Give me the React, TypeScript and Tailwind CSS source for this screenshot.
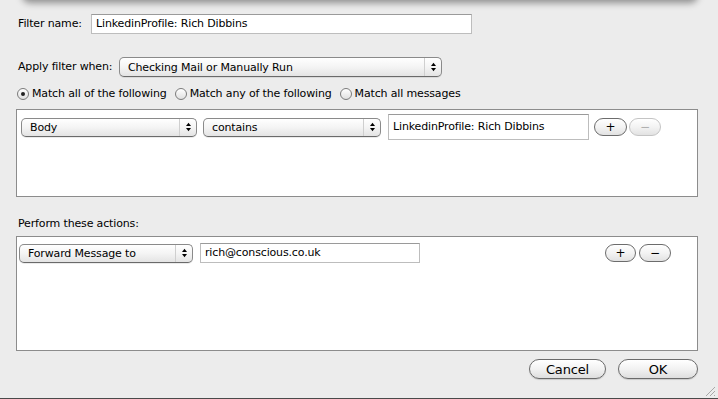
import React from "react";

function Arrows() {
  return (
    <svg width="7" height="10" viewBox="0 0 7 10" className="text-black">
      <path d="M3.5 0.8 L6 4 L1 4 Z" fill="currentColor" />
      <path d="M1 6 L6 6 L3.5 9.2 Z" fill="currentColor" />
    </svg>
  );
}

function Popup({ label, className }: { label: string; className: string }) {
  return (
    <div
      className={
        "flex shrink-0 items-stretch rounded-[5px] border border-[#8a8a8a] border-b-[#6a6a6a] bg-gradient-to-b from-[#ffffff] via-[#f4f4f4] to-[#e4e4e4] shadow-[0_1px_0_rgba(0,0,0,0.08)] " +
        className
      }
    >
      <span className="flex flex-1 items-center pl-[8px] leading-none">{label}</span>
      <span className="flex w-[17px] items-center justify-center border-l border-[#cfcfcf]">
        <Arrows />
      </span>
    </div>
  );
}

function Field({ value, className }: { value: string; className: string }) {
  return (
    <div
      className={
        "flex shrink-0 items-center border border-[#bdbdbd] border-t-[#9a9a9a] bg-white pl-[4px] " +
        className
      }
    >
      {value}
    </div>
  );
}

function SmallButton({ sign, disabled, className }: { sign: string; disabled?: boolean; className: string }) {
  return (
    <div
      className={
        "flex shrink-0 items-center justify-center rounded-full border bg-gradient-to-b from-[#ffffff] via-[#f3f3f3] to-[#e2e2e2] text-[12px] leading-none " +
        (disabled ? "border-[#c4c4c4] text-[#b0b0b0] " : "border-[#6c6c6c] text-black ") +
        className
      }
    >
      {sign}
    </div>
  );
}

function PushButton({ label, className }: { label: string; className: string }) {
  return (
    <div
      className={
        "flex items-center justify-center rounded-full border border-[#6a6a6a] bg-gradient-to-b from-[#ffffff] via-[#f2f2f2] to-[#dedede] text-[13px] leading-none text-black shadow-[0_1px_1px_rgba(0,0,0,0.15)] " +
        className
      }
    >
      {label}
    </div>
  );
}

function Radio({ checked, label }: { checked?: boolean; label: string }) {
  return (
    <div className="flex items-center gap-[3px]">
      <span className="flex h-[12px] w-[12px] items-center justify-center rounded-full border border-[#7b7b7b] bg-gradient-to-b from-[#ffffff] to-[#e0e0e0]">
        {checked && <span className="h-[4px] w-[4px] rounded-full bg-[#222]" />}
      </span>
      <span>{label}</span>
    </div>
  );
}

export default function App() {
  return (
    <div className="relative h-[399px] w-[718px] overflow-hidden bg-[#ececec] font-['DejaVu_Sans',sans-serif] text-[11px] tracking-[-0.15px] text-black">
      {/* shadow of the window the sheet hangs from */}
      <div className="absolute left-[24px] top-[-20px] h-[20px] w-[672px] rounded-[6px] bg-[#d8d8d8] shadow-[0_1px_7px_2px_rgba(0,0,0,0.4)]" />

      <div className="flex flex-col">
        <div className="mt-[14px] flex h-[20px] items-center pl-[18px]">
          <span className="w-[73px]">Filter name:</span>
          <Field value="LinkedinProfile: Rich Dibbins" className="h-[20px] w-[381px]" />
        </div>

        <div className="mt-[23px] flex h-[20px] items-center pl-[18px]">
          <span className="w-[101px]">Apply filter when:</span>
          <Popup label="Checking Mail or Manually Run" className="h-[20px] w-[323px]" />
        </div>

        <div className="mt-[10px] flex h-[14px] items-center gap-[8px] pl-[17px]">
          <Radio checked label="Match all of the following" />
          <Radio label="Match any of the following" />
          <Radio label="Match all messages" />
        </div>

        <div className="ml-[16px] mt-[8px] h-[88px] w-[682px] border border-[#8c8c8c] bg-white pt-[4px]">
          <div className="flex h-[26px] items-center pl-[4px]">
            <Popup label="Body" className="h-[19px] w-[176px]" />
            <Popup label="contains" className="ml-[6px] h-[19px] w-[178px]" />
            <Field value="LinkedinProfile: Rich Dibbins" className="ml-[7px] h-[26px] w-[201px]" />
            <SmallButton sign="+" className="ml-[5px] h-[18px] w-[33px]" />
            <SmallButton sign="−" disabled className="ml-[2px] h-[18px] w-[32px]" />
          </div>
        </div>

        <div className="mt-[20px] flex h-[14px] items-center pl-[18px]">Perform these actions:</div>

        <div className="ml-[16px] mt-[5px] h-[115px] w-[682px] border border-[#8c8c8c] bg-white pt-[6px]">
          <div className="flex h-[20px] items-center pl-[2px]">
            <Popup label="Forward Message to" className="h-[19px] w-[174px]" />
            <Field value="rich@conscious.co.uk" className="ml-[7px] h-[20px] w-[220px]" />
            <SmallButton sign="+" className="ml-[185px] h-[18px] w-[31px]" />
            <SmallButton sign="−" className="ml-[3px] h-[18px] w-[32px]" />
          </div>
        </div>

        <div className="mt-[8px] flex justify-end gap-[12px] pr-[20px]">
          <PushButton label="Cancel" className="h-[20px] w-[77px]" />
          <PushButton label="OK" className="h-[20px] w-[80px]" />
        </div>
      </div>

      {/* resize grip */}
      <svg className="absolute bottom-[2px] right-[2px]" width="12" height="12" viewBox="0 0 12 12">
        <path d="M11 2 L2 11 M11 6 L6 11 M11 10 L10 11" stroke="#a8a8a8" strokeWidth="1" />
      </svg>
      <div className="absolute bottom-0 left-0 h-[1px] w-full bg-[#4a4a4a]" />
    </div>
  );
}
